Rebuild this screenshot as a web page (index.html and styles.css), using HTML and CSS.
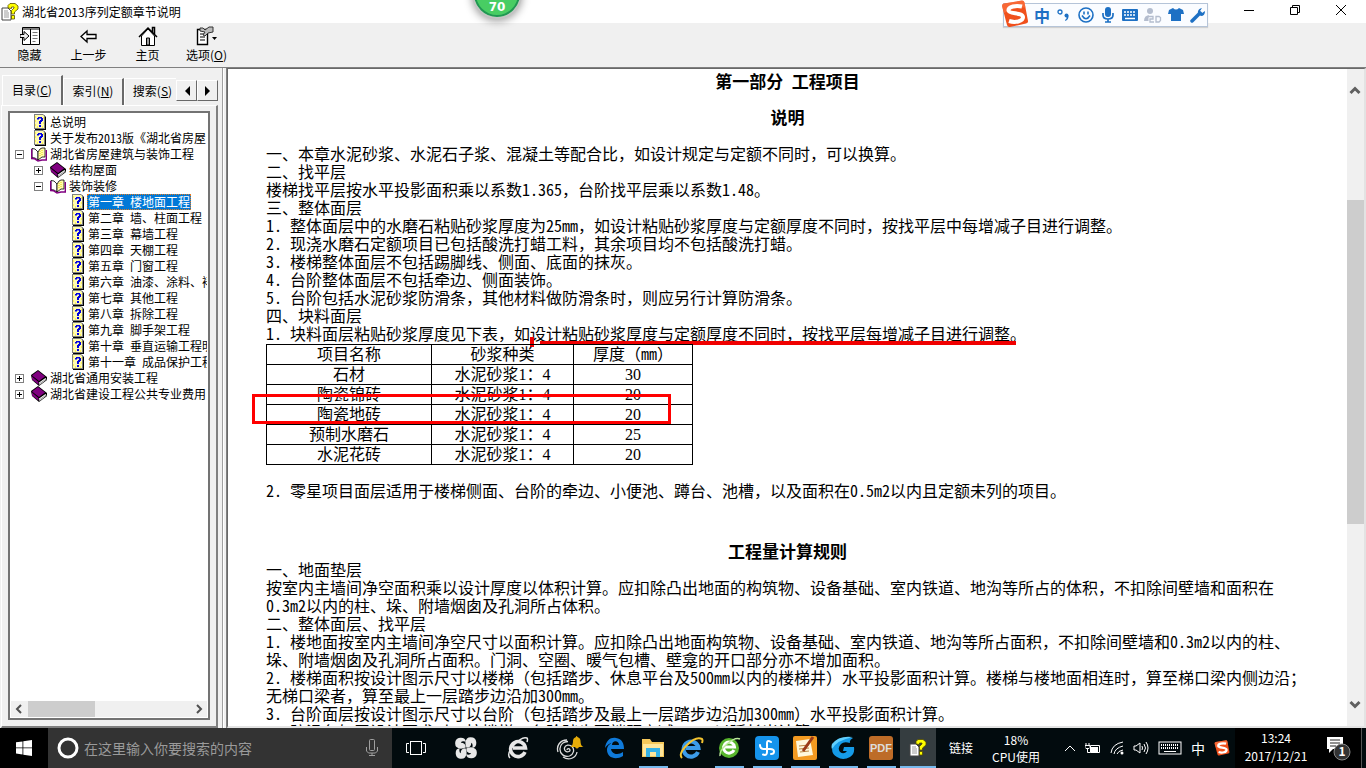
FILE: index.html
```html
<!DOCTYPE html>
<html lang="zh-CN">
<head>
<meta charset="utf-8">
<title>湖北省2013序列定额章节说明</title>
<link rel="stylesheet" href="styles.css">
</head>
<body>
<svg class="defs" aria-hidden="true">
  <symbol id="i-page" viewBox="0 0 16 16"><path d="M4 1h9l2 2v13H4z" fill="#000"/><path d="M3 0h9l2 2v13H3z" fill="#808080"/><path d="M4 1h8l1 1v12H4z" fill="#fffbb0"/><path d="M4 3h1M12 4h1M4 7h1M12 9h1M4 11h1M11 13h1M6 13h1" stroke="#ffe600" stroke-width="1"/><path d="M6 5.500V4h1V3h4v1h1v3h-1v1h-1v2H8V7h1V6h1V4.500H8v1zM8 11h2v2H8z" fill="#0000e0"/></symbol>
  <symbol id="i-open" viewBox="0 0 16 16"><path d="M1 2.500l3 .500 3 3v8l-3-2-3-.500z" fill="#fff" stroke="#000" stroke-width=".8"/><path d="M7 6l2-3 2-1 3 0v9l-3 0-4 3z" fill="#fffbb0" stroke="#000" stroke-width=".8"/><path d="M9 5v6M11 4v6" stroke="#e8d800" stroke-dasharray="1 1"/><path d="M.700 3v9.500l3 .300L7 15l4-1h4.300V4" fill="none" stroke="#800080" stroke-width="1.400"/></symbol>
  <symbol id="i-closed" viewBox="0 0 16 16"><path d="M0 5l7-5 9 7v3l-8 6-7-6z" fill="#000"/><path d="M1 5.500l6-4.500 7 5.500-6 4.500z" fill="#800080"/><path d="M8 12.500l6.500-4.500 1 1.500L8.500 15z" fill="#fff"/><path d="M8.500 13.700l6.500-4.500" stroke="#808080" stroke-width=".8"/><path d="M1 6.500v3l6.500 5v-2.500z" fill="#800080"/></symbol>
  <symbol id="i-help" viewBox="0 0 18 18"><path d="M1 5h6l3 3v9H1z" fill="#fff" stroke="#444"/><path d="M3 8h4M3 10h5M3 12h5M3 14h5" stroke="#999"/><path d="M7 5V2.500L9 .500h5l3 2.500v3l-3.500 3V11h-3V7.500L13 5V4h-2.500v1.500z" fill="#ff0" stroke="#554d00" stroke-width=".8"/><path d="M10.500 12.500h3V16h-3z" fill="#ff0" stroke="#554d00" stroke-width=".8"/></symbol>
  <symbol id="i-sogou" viewBox="0 0 28 28"><path d="M1 6q0-2 2-2.400L21 .500q2 0 2.500 2L27 21q.300 2-2 2.500L9 27q-2.300.500-3-2z" fill="#f0501c"/><path d="M1 6q0-2 2-2.400L21 .500q2 0 2.500 2l1 5Q15 7 3 13z" fill="#ff8050" opacity=".5"/><path d="M21 6.500C15 5 7 6.500 7.500 10.500c.5 4 14 1.500 14.500 6.500.300 4.500-8 6-14 4" fill="none" stroke="#fff" stroke-width="4"/></symbol>
</svg>

<header class="titlebar">
  <svg class="s18"><use href="#i-help"/></svg>
  <h1 class="titletext">湖北省2013序列定额章节说明</h1>
  <div class="winbtns">
    <button aria-label="最小化"><svg width="12" height="12"><path d="M1 6.500h10" stroke="#000"/></svg></button>
    <button aria-label="还原"><svg width="12" height="12"><path d="M1.500 3.500h7v7h-7zM3.500 3.500v-2h7v7h-2" fill="none" stroke="#000"/></svg></button>
    <button aria-label="关闭"><svg width="12" height="12"><path d="M1 1l10 10M11 1L1 11" stroke="#000"/></svg></button>
  </div>
</header>
<div class="ball">70</div>
<div class="ime">
  <svg class="ime-logo"><use href="#i-sogou"/></svg>
  <span class="ime-zh">中</span>
  <svg width="16" height="16"><circle cx="4" cy="5" r="2" fill="none" stroke="#1d70c4" stroke-width="1.300"/><circle cx="10.500" cy="8.500" r="2" fill="#1d70c4"/><path d="M12.500 8.500q.300 4-3 5.500l-.500-1q2-1 1.600-3z" fill="#1d70c4"/></svg>
  <svg width="16" height="16" fill="none" stroke="#1d70c4" stroke-width="1.600"><circle cx="8" cy="8" r="7"/><path d="M6 4.500v3M10 4.500v3M4 8.500q4 6.500 8 0"/></svg>
  <svg width="16" height="16"><rect x="5" y="0" width="6" height="10" rx="3" fill="#1d70c4"/><path d="M3 6v2q0 4 5 4t5-4V6M8 12v3M5 15h6" fill="none" stroke="#1d70c4" stroke-width="1.700"/></svg>
  <svg width="16" height="16"><rect x="0" y="2" width="16" height="12" rx="1" fill="#1d70c4"/><path d="M2 5h12M2 8h12" stroke="#fff" stroke-width="1.500" stroke-dasharray="2 1"/><path d="M3 11.500h10" stroke="#fff" stroke-width="1.500"/></svg>
  <svg width="18" height="16"><circle cx="6" cy="4" r="3" fill="#b4bdce"/><path d="M0 14q0-6 6-6 5 0 6 3H7v3z" fill="#b4bdce"/><path d="M5 9.500h4v2.500H6v3h4M12 9.500h3l1.500 1v3l-1.500 1.500h-3z" fill="none" stroke="#fafcff" stroke-width="3"/><path d="M5 9.500h4v2.500H6v3h4M12 9.500h3l1.500 1v3l-1.500 1.500h-3z" fill="none" stroke="#b4bdce" stroke-width="1.300"/></svg>
  <svg width="16" height="16"><path d="M5 1q3 3 6 0l4 2 1 4h-3v7H3V7H0l1-4z" fill="#1d70c4"/></svg>
  <svg width="16" height="16"><path d="M2 14l8-8" stroke="#1d70c4" stroke-width="3.500" stroke-linecap="round"/><path d="M12 1Q7 2 8 7l3 2q4 0 4-5l-3 2-2-2z" fill="#1d70c4"/></svg>
</div>

<nav class="toolbar">
  <button><svg width="20" height="20"><path d="M2.500 1.500h17v17h-17z" fill="#fff" stroke="#000"/><path d="M2 3h18M10.500 3v16" stroke="#000"/><path d="M12.500 6.500h5M12.500 9.500h5M12.500 12.500h5M12.500 15.500h3" stroke="#777"/><path d="M0 8.500h4v-3l5 4.500-5 4.500v-3H0z" fill="#eee" stroke="#000"/></svg><span>隐藏</span></button>
  <button><svg width="20" height="20"><path d="M2 10.500l6-5.500v3.500h9v4H8V16z" fill="#fff" stroke="#000" stroke-width="1.300"/></svg><span>上一步</span></button>
  <button><svg width="20" height="20"><path d="M3.500 10v9.500h13V10L10 3z" fill="#fff" stroke="#000"/><path d="M1 11L10 2l9 9M14.500 6V1.500h2V8" fill="none" stroke="#000" stroke-width="1.500"/><path d="M8.500 19v-7h3v7z" fill="#999" stroke="#000"/></svg><span>主页</span></button>
  <button><svg width="22" height="20"><path d="M1.500 3.500h10v15h-10z" fill="#fff" stroke="#000" stroke-width="1.400"/><path d="M4 8h5M4 11h5M4 14h5" stroke="#555" stroke-width="1.500"/><path d="M4 2h3l2 2 4-3h4v5l-5 1-3 3-2-1 2-3-5-1z" fill="#bbb" stroke="#333"/><path d="M16 11h5l-2.500 3z"/></svg><span>选项(<u>O</u>)</span></button>
</nav>

<main class="work">
  <aside class="side">
    <div class="tabs" role="tablist">
      <button class="tab on" role="tab" aria-selected="true">目录(<u>C</u>)</button>
      <button class="tab" role="tab">索引(<u>N</u>)</button>
      <button class="tab last" role="tab">搜索(<u>S</u>)</button>
      <button class="spin" aria-label="向左"><svg width="6" height="10"><path d="M6 0v10L1 5z"/></svg></button>
      <button class="spin" aria-label="向右"><svg width="6" height="10"><path d="M0 0v10l5-5z"/></svg></button>
    </div>
    <div class="pane">
      <div class="treebox">
        <ul class="tree">
          <li><i class="ex none"></i><svg class="s16"><use href="#i-page"/></svg><span>总说明</span></li>
          <li><i class="ex none"></i><svg class="s16"><use href="#i-page"/></svg><span>关于发布2013版《湖北省房屋</span></li>
          <li><i class="ex"></i><svg class="s16"><use href="#i-open"/></svg><span>湖北省房屋建筑与装饰工程</span></li>
          <li class="l1"><i class="ex plus"></i><svg class="s16"><use href="#i-closed"/></svg><span>结构屋面</span></li>
          <li class="l1"><i class="ex"></i><svg class="s16"><use href="#i-open"/></svg><span>装饰装修</span></li>
          <li class="l2"><i class="ex none"></i><svg class="s16"><use href="#i-page"/></svg><span class="sel">第一章 楼地面工程</span></li>
          <li class="l2"><i class="ex none"></i><svg class="s16"><use href="#i-page"/></svg><span>第二章 墙、柱面工程</span></li>
          <li class="l2"><i class="ex none"></i><svg class="s16"><use href="#i-page"/></svg><span>第三章 幕墙工程</span></li>
          <li class="l2"><i class="ex none"></i><svg class="s16"><use href="#i-page"/></svg><span>第四章 天棚工程</span></li>
          <li class="l2"><i class="ex none"></i><svg class="s16"><use href="#i-page"/></svg><span>第五章 门窗工程</span></li>
          <li class="l2"><i class="ex none"></i><svg class="s16"><use href="#i-page"/></svg><span>第六章 油漆、涂料、裱糊工程</span></li>
          <li class="l2"><i class="ex none"></i><svg class="s16"><use href="#i-page"/></svg><span>第七章 其他工程</span></li>
          <li class="l2"><i class="ex none"></i><svg class="s16"><use href="#i-page"/></svg><span>第八章 拆除工程</span></li>
          <li class="l2"><i class="ex none"></i><svg class="s16"><use href="#i-page"/></svg><span>第九章 脚手架工程</span></li>
          <li class="l2"><i class="ex none"></i><svg class="s16"><use href="#i-page"/></svg><span>第十章 垂直运输工程明细</span></li>
          <li class="l2"><i class="ex none"></i><svg class="s16"><use href="#i-page"/></svg><span>第十一章 成品保护工程</span></li>
          <li><i class="ex plus"></i><svg class="s16"><use href="#i-closed"/></svg><span>湖北省通用安装工程</span></li>
          <li><i class="ex plus"></i><svg class="s16"><use href="#i-closed"/></svg><span>湖北省建设工程公共专业费用</span></li>
        </ul>
        <div class="hbar">
          <svg width="17" height="16"><path d="M10 4L6 8l4 4" class="arw"/></svg><div class="hthumb"></div>
          <svg width="17" height="16"><path d="M7 4l4 4-4 4" class="arw"/></svg>
        </div>
      </div>
    </div>
  </aside>
  <div class="split"></div>
  <section class="docbox">
    <article class="doc">
      <h2>第一部分<span class="n"> </span>工程项目</h2>
      <h2>说明</h2>
      <p>一、本章水泥砂浆、水泥石子浆、混凝土等配合比，如设计规定与定额不同时，可以换算。</p>
      <p>二、找平层</p>
      <p>楼梯找平层按水平投影面积乘以系数<span class="n">1.365</span>，台阶找平层乘以系数<span class="n">1.48</span>。</p>
      <p>三、整体面层</p>
      <p><span class="n">1. </span>整体面层中的水磨石粘贴砂浆厚度为<span class="n">25mm</span>，如设计粘贴砂浆厚度与定额厚度不同时，按找平层中每增减子目进行调整。</p>
      <p><span class="n">2. </span>现浇水磨石定额项目已包括酸洗打蜡工料，其余项目均不包括酸洗打蜡。</p>
      <p><span class="n">3. </span>楼梯整体面层不包括踢脚线、侧面、底面的抹灰。</p>
      <p><span class="n">4. </span>台阶整体面层不包括牵边、侧面装饰。</p>
      <p><span class="n">5. </span>台阶包括水泥砂浆防滑条，其他材料做防滑条时，则应另行计算防滑条。</p>
      <p>四、块料面层</p>
      <p><span class="n">1. </span>块料面层粘贴砂浆厚度见下表，如<span class="marked">设计粘贴砂浆厚度与定额厚度不同时，按找平层每增减子目进行调整。</span></p>
      <div class="tablewrap">
        <table>
          <tr><th>项目名称</th><th>砂浆种类</th><th>厚度（<span class="n">mm</span>）</th></tr>
          <tr><td>石材</td><td>水泥砂浆1：4</td><td>30</td></tr>
          <tr><td>陶瓷锦砖</td><td>水泥砂浆1：4</td><td>20</td></tr>
          <tr><td>陶瓷地砖</td><td>水泥砂浆1：4</td><td>20</td></tr>
          <tr><td>预制水磨石</td><td>水泥砂浆1：4</td><td>25</td></tr>
          <tr><td>水泥花砖</td><td>水泥砂浆1：4</td><td>20</td></tr>
        </table>
        <div class="redbox"></div>
      </div>
      <p><span class="n">2. </span>零星项目面层适用于楼梯侧面、台阶的牵边、小便池、蹲台、池槽，以及面积在<span class="n">0.5m2</span>以内且定额未列的项目。</p>
      <h2 class="rules">工程量计算规则</h2>
      <p>一、地面垫层</p>
      <p>按室内主墙间净空面积乘以设计厚度以体积计算。应扣除凸出地面的构筑物、设备基础、室内铁道、地沟等所占的体积，不扣除间壁墙和面积在<span class="n">0.3m2</span>以内的柱、垛、附墙烟囱及孔洞所占体积。</p>
      <p>二、整体面层、找平层</p>
      <p><span class="n">1. </span>楼地面按室内主墙间净空尺寸以面积计算。应扣除凸出地面构筑物、设备基础、室内铁道、地沟等所占面积，不扣除间壁墙和<span class="n">0.3m2</span>以内的柱、垛、附墙烟囱及孔洞所占面积。门洞、空圈、暖气包槽、壁龛的开口部分亦不增加面积。</p>
      <p><span class="n">2. </span>楼梯面积按设计图示尺寸以楼梯（包括踏步、休息平台及<span class="n">500mm</span>以内的楼梯井）水平投影面积计算。楼梯与楼地面相连时，算至梯口梁内侧边沿；无梯口梁者，算至最上一层踏步边沿加<span class="n">300mm</span>。</p>
      <p><span class="n">3. </span>台阶面层按设计图示尺寸以台阶（包括踏步及最上一层踏步边沿加<span class="n">300mm</span>）水平投影面积计算。</p>
      <p><span class="n">4. </span>防滑条如无设计要求时，按楼梯、台阶踏步两端距离减<span class="n">300mm</span>以延长米计算。</p>
    </article>
    <div class="vbar">
      <svg width="16" height="42"><path d="M3.500 24L8 19.500l4.500 4.500" class="arw2"/></svg>
      <div class="vtrack"><div class="vthumb"></div></div>
      <svg width="16" height="42"><path d="M3.500 18L8 22.500l4.500-4.500" class="arw2"/></svg>
    </div>
  </section>
</main>

<footer class="taskbar">
  <button class="start" aria-label="开始"><svg width="16" height="16" fill="#fff"><path d="M0 2.300l6.500-.900v6.100H0zM7.300 1.300L16 0v7.500H7.300zM0 8.300h6.500v6.200L0 13.600zM7.300 8.300H16V16l-8.700-1.300z"/></svg></button>
  <div class="search">
    <svg width="24" height="24"><circle cx="12" cy="12" r="9" fill="none" stroke="#fff" stroke-width="3"/></svg>
    <input type="text" aria-label="搜索" placeholder="在这里输入你要搜索的内容">
    <svg width="12" height="18" fill="none" stroke="#a0a0a0"><rect x="3.500" y=".500" width="5" height="11" rx="1"/><path d="M.500 8v4l2 2h7l2-2V8M6 14v3M3 16.500h6"/></svg>
  </div>
  <button class="app w48" aria-label="任务视图"><svg width="20" height="16" fill="none" stroke="#fff"><rect x="4.500" y="1.500" width="11" height="13"/><path d="M3 3.500H.500v9H3M17 3.500h2.500v9H17"/></svg></button>
  <button class="app w52" aria-label="应用"><svg width="22" height="22" fill="#e8e8e8"><path d="M10.700 10.500Q5 13 1.500 10-.5 8 .5 4q1-3 5-3.300 5-.2 5.300 4-4-1-5 1 5 0 5 4.800z"/><path d="M11.500 10.700Q9 5 12 1.500q2-2 6-1 3 1 3.300 5 .2 5-4 5.300 1-4-1-5 0 5-4.800 5z"/><path d="M11.300 11.500Q17 9 20.500 12q2 2 1 6-1 3-5 3.300-5 .2-5.300-4 4 1 5-1-5 0-5-4.800z"/><path d="M10.500 11.300Q13 17 10 20.500q-2 2-6 1-3-1-3.300-5-.2-5 4-5.300-1 4 1 5 0-5 4.800-5z"/></svg></button>
  <button class="app w52" aria-label="浏览器"><svg width="22" height="24"><path d="M18 16a7.500 7.500 0 1 1 .500-4H6" fill="none" stroke="#e8e8e8" stroke-width="3.500"/><path d="M3 22Q-1 18 7 9T20 2q1 1 0 4" fill="none" stroke="#e8e8e8" stroke-width="1.500"/></svg></button>
  <button class="app w52" aria-label="提醒"><svg width="28" height="26"><path d="M11 15a1.500 1.500 0 1 1 2 1.500c-3 1-5-1-4.500-3.500.5-3 5-4 7.500-1.500 3 3 1.500 8-2.500 9.500-5 1.500-10-2-9.500-7.500C4.500 9 8 6.500 12 6.500M2 17C0 11 4 5 11 5M7 22c6 4 13 1 14-5" fill="none" stroke="#ddd" stroke-width="1.300"/><path d="M14 12q3-1 3-6 0-3 3-4 0-2 1.500 0 3 1 3 4 0 5 3 6zM19 12h4q-2 3-4 0" fill="#e5ac08"/></svg></button>
  <button class="app" aria-label="Edge"><svg width="22" height="22"><path d="M1 11C2 3 7 0 12 1c6 1 8 5 8 11H7c1 6 8 6 12 3v4C11 24 3 20 3 13 3 9 6 6 9 6c-4 0-6 2-8 5zm7-3h7c0-5-7-5-7 0z" fill="#0f7ada"/></svg></button>
  <button class="app run" aria-label="文件资源管理器"><svg width="22" height="20"><path d="M0 1h8l2 3h12v15H0z" fill="#f5c85a"/><path d="M1 6h20v12H1z" fill="#ffe69b"/><path d="M4 10h14v9h-4v-5H8v5H4z" fill="#36b2e6"/></svg></button>
  <button class="app" aria-label="Internet Explorer"><svg width="26" height="24"><path d="M20 16a7.500 7.500 0 1 1 .500-4H8" fill="none" stroke="#3c9be8" stroke-width="4"/><path d="M4 22Q0 18 9 9T24 3q1 1 0 4" fill="none" stroke="#f4c430" stroke-width="2"/></svg></button>
  <button class="app run" aria-label="安全浏览器"><svg width="24" height="24"><circle cx="12" cy="12" r="10" fill="#58b52c"/><path d="M17 14a5.500 5.500 0 1 1 .500-3H8" fill="none" stroke="#fff" stroke-width="3"/><path d="M3 20Q2 15 10 8t13-5" fill="none" stroke="#bce99a" stroke-width="1.500"/></svg></button>
  <button class="app run" aria-label="造价软件"><svg width="24" height="24"><rect width="24" height="24" rx="4" fill="#1594ec"/><path d="M16 6q-4-2.500-4 1v9q0 4-4 2.500M5 9q0 4 4 4h6q4 0 4 2.500T16 18" fill="none" stroke="#fff" stroke-width="2" stroke-linecap="round"/></svg></button>
  <button class="app run" aria-label="便笺"><svg width="24" height="24"><rect width="24" height="24" rx="2" fill="#f39a21"/><path d="M3 5l14-2 3 16-15 2z" fill="#fff8dc"/><path d="M6 10l10-1M6 13l10-1M7 16l9-1" stroke="#b98442"/><path d="M20 1L10 15" stroke="#9b3a18" stroke-width="3"/></svg></button>
  <button class="app run" aria-label="广联达"><svg width="24" height="24"><path d="M22 2Q18 4 19 7q-6-2-9 1-4 4-1 8 4 3 7-1h-4l1-4h10q1 7-4 10-7 4-13 0Q-1 17 2 9q3-7 11-7z" fill="#159be8"/><path d="M22 1Q8-1 1 8q-1 3 0 5Q6 4 22 1z" fill="#61d0ff"/></svg></button>
  <button class="app run" aria-label="PDF"><svg width="24" height="24"><rect width="24" height="24" rx="3" fill="#bd6c28"/><text x="12" y="16" text-anchor="middle" class="pdf">PDF</text></svg></button>
  <button class="app run cur" aria-label="帮助"><svg class="s18"><use href="#i-help"/></svg></button>
  <span class="links">链接</span>
  <div class="cpu">18%<br>CPU使用</div>
  <div class="tray">
    <svg width="12" height="8"><path d="M1 7l5-5 5 5" class="w"/></svg>
    <svg width="16" height="12"><path d="M5.500 3.500h9v7h-9zM1 1v2M4 1v2M0 3.500h5v2l-1 1H1l-1-1zM2.500 7v3.500h3" class="w"/><path d="M6 5h7v5H6z" fill="#fff"/></svg>
    <svg width="14" height="14"><path d="M1 12Q2 3 13 1M4 13q1-6 9-8M7 13q1-3 6-4" class="w"/><circle cx="12" cy="12" r="1.500" fill="#fff"/></svg>
    <svg width="16" height="14"><path d="M1 5h2l4-3v10L3 9H1zM9 5q1 2 0 4M11 3q3 4 0 8M13 1q4 6 0 12" class="w"/></svg>
    <svg width="24" height="14"><rect x="1" y="1" width="22" height="12" class="w"/><path d="M3 4h18M3 7h18" stroke="#fff" stroke-dasharray="1 1" stroke-width="2"/><path d="M6 10.500h12" class="w"/></svg>
    <span class="zh">中</span>
    <svg class="s16"><use href="#i-sogou"/></svg>
  </div>
  <div class="clock">13:24<br>2017/12/21</div>
  <button class="note" aria-label="通知"><svg width="28" height="26"><path d="M2 2h16v12H8l-4 4v-4H2z" fill="#fff"/><path d="M5 5h10M5 8h10M5 11h6" stroke="#222"/><circle cx="17" cy="17" r="8" fill="#333" stroke="#888"/><text x="17" y="21" text-anchor="middle" class="num">1</text></svg></button>
</footer>
</body>
</html>
```

FILE: styles.css
```css
* { box-sizing: border-box; }
body {
  margin: 0;
  height: 100vh;
  display: flex;
  flex-direction: column;
  overflow: hidden;
  position: relative;
  background: #f0f0f0;
  color: #000;
  font: 12px/16px "Noto Sans CJK SC", sans-serif;
}
button { border: 0; padding: 0; margin: 0; background: none; font: inherit; color: inherit; }
svg { flex: none; display: block; }
.defs { position: absolute; width: 0; height: 0; }
.s16 { width: 16px; height: 16px; }
.s18 { width: 18px; height: 18px; }

.titlebar { display: flex; align-items: center; height: 23px; background: #fff; padding-left: 1px; gap: 3px; flex: none; }
.titletext { margin: 0; font: 12px/16px "Noto Sans CJK SC", sans-serif; flex: 1; }
.winbtns { display: flex; margin-right: 2px; }
.winbtns button { width: 46px; height: 20px; margin-bottom: 3px; display: flex; justify-content: center; align-items: center; }

.ball {
  position: absolute; left: 472px; top: -31px; width: 50px; height: 50px;
  border-radius: 50%; border: 2px solid #c4c4c4; background: #48cd63;
  box-shadow: inset 0 0 0 2px #209653, 0 2px 8px #0006;
  color: #fff; font: bold 12px/16px "DejaVu Sans", sans-serif;
  text-align: center; padding-top: 28px;
}
.ime {
  position: absolute; right: 158px; top: 3px; height: 24px; width: 205px;
  display: flex; align-items: center; gap: 6px; padding-left: 30px;
  background: #fafcff; border: 1px solid #b5c4d8; box-shadow: 0 1px 1px #0002;
}
.ime-logo { position: absolute; left: -3px; top: -4px; width: 28px; height: 28px; }
.ime-zh { color: #1d70c4; font-size: 16px; font-weight: bold; line-height: 20px; }

.toolbar { display: flex; height: 44px; flex: none; }
.toolbar button { width: 59px; display: flex; flex-direction: column; align-items: center; gap: 1px; padding-top: 3px; white-space: nowrap; }

.work { flex: 1; min-height: 0; display: flex; border-top: 1px solid #808080; }
.side { width: 218px; flex: none; display: flex; flex-direction: column; padding-left: 1px; }
.tabs { display: flex; align-items: flex-end; height: 37px; padding-left: 1px; }
.tab { width: 61px; height: 27px; border: 1px solid #fff; border-right: 2px solid #696969; border-bottom: 0; padding-bottom: 2px; white-space: nowrap; }
.tab.on { height: 30px; }
.tab.last { width: 52px; border-right: 0; overflow: hidden; padding-left: 4px; }
.spin { width: 21px; height: 21px; margin-bottom: 4px; border: 1px solid #fff; border-right-color: #696969; border-bottom-color: #696969; display: flex; align-items: center; justify-content: center; background: #f0f0f0; }
.pane { flex: 1; min-height: 0; display: flex; padding: 5px 6px 6px; border: 1px solid #fff; border-right: 2px solid #808080; border-bottom: 2px solid #808080; }
.treebox { flex: 1; min-width: 0; display: flex; flex-direction: column; background: #fff; border: 2px solid #737373; padding: 1px; }
.tree { list-style: none; margin: 0; padding: 0; flex: 1; overflow: hidden; font-feature-settings: "hwid"; }
.tree li { display: flex; align-items: center; height: 16px; padding-left: 4px; white-space: nowrap; }
.tree .l1 { padding-left: 23px; }
.tree .l2 { padding-left: 42px; }
.tree span { margin-left: 2px; padding: 0 1px; line-height: 16px; }
.tree .sel { background: #0078d7; color: #fff; outline: 1px dotted #e07b20; outline-offset: -1px; }
.ex { width: 9px; height: 9px; margin-right: 7px; flex: none; border: 1px solid #808080; background: linear-gradient(#000, #000) center / 5px 1px no-repeat; }
.ex.plus { background: linear-gradient(#000, #000) center / 5px 1px no-repeat, linear-gradient(#000, #000) center / 1px 5px no-repeat; }
.ex.none { visibility: hidden; }
.hbar { display: flex; height: 16px; background: #f0f0f0; }
.hthumb { width: 67px; background: #cdcdcd; margin-right: auto; }
.arw { fill: none; stroke: #505050; stroke-width: 2; }
.arw2 { fill: none; stroke: #606060; stroke-width: 3; }
.split { width: 9px; flex: none; background: linear-gradient(90deg, #f0f0f0 4px, #a0a0a0 4px, #a0a0a0 5px, #fff 5px, #fff 6px, #f0f0f0 6px, #f0f0f0 8px, #808080 8px); }

.docbox { flex: 1; min-width: 0; display: flex; background: #fff; border: 1px solid #696969; border-right: 2px solid #e3e3e3; border-bottom: 2px solid #e3e3e3; }
.doc { flex: 1; min-width: 0; overflow: hidden; padding: 5px 38px 0; font: 16px/18px "Liberation Serif", "Noto Sans CJK SC", serif; text-spacing-trim: space-all; }
.doc h2 { margin: 0 0 18px; font-size: 17px; line-height: 18px; text-align: center; }
.doc p { margin: 0; }
.doc .rules { margin: 43px 0 0; }
.n { font-family: "Noto Sans CJK SC", sans-serif; font-feature-settings: "hwid"; line-height: 14px; white-space: pre-wrap; }
.marked { position: relative; }
.marked::before { content: ""; position: absolute; left: 0; bottom: -4px; width: 4px; height: 10px; background: #f00000; }
.marked::after { content: ""; position: absolute; left: 10px; right: 10px; bottom: -2px; height: 4px; background: #f00000; }
.tablewrap { position: relative; width: 427px; margin: 0 0 18px; }
table { width: 100%; border-collapse: collapse; table-layout: fixed; }
th, td { border: 1px solid #000; padding: 0; height: 20px; line-height: 18px; font-weight: normal; text-align: center; }
th:nth-child(1) { width: 165px; }
th:nth-child(2) { width: 142px; }
.redbox { position: absolute; left: -14px; top: 50px; width: 419px; height: 30px; border: 3px solid #f00; }
.vbar { width: 17px; flex: none; background: #f0f0f0; display: flex; flex-direction: column; }
.vtrack { flex: 1; padding-top: 89px; }
.vthumb { height: 67%; background: #cdcdcd; }

.taskbar { height: 40px; flex: none; display: flex; align-items: stretch; background: #020b0e; color: #fff; }
.start { width: 48px; display: flex; align-items: center; justify-content: center; background: #000; }
.search { width: 344px; display: flex; align-items: center; padding: 0 14px 0 8px; background: #333; gap: 4px; }
.search input { flex: 1; min-width: 0; border: 0; outline: 0; padding: 0; background: none; font: 14px/20px "Noto Sans CJK SC", sans-serif; color: #fff; }
.search input::placeholder { color: #9a9a9a; opacity: 1; }
.app { width: 38px; flex: none; display: flex; align-items: center; justify-content: center; }
.w48 { width: 48px; }
.w52 { width: 52px; }
.run { background: linear-gradient(#76b9ed, #76b9ed) center bottom / 29px 2px no-repeat; }
.cur { width: 36px; background: linear-gradient(#76b9ed, #76b9ed) center bottom / 36px 2px no-repeat #353d40; }
.pdf { font: bold 11px "Liberation Sans", sans-serif; fill: #ddd; }
.links { align-self: center; margin-left: 13px; }
.cpu { margin-left: 18px; width: 50px; text-align: center; line-height: 17px; padding-top: 3px; white-space: nowrap; }
.tray { margin-left: auto; display: flex; align-items: center; gap: 9px; }
.w { fill: none; stroke: #fff; stroke-width: 1; }
.zh { font-size: 14px; line-height: 20px; }
.clock { width: 82px; margin-left: 5px; text-align: center; line-height: 18px; padding-top: 1px; background: #000; }
.note { width: 45px; display: flex; align-items: center; justify-content: center; background: #000; border-right: 1px solid #555; margin-right: 4px; }
.num { font: bold 12px "Noto Sans CJK SC", sans-serif; fill: #fff; }
```
